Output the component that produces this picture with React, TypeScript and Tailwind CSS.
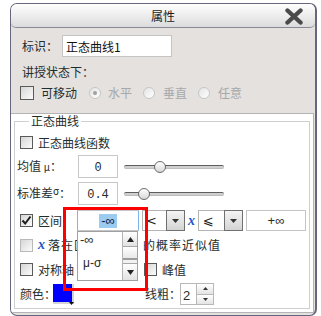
import React from "react";

function Check({ checked = false, light = false, size = 13 }: { checked?: boolean; light?: boolean; size?: number }) {
  return (
    <span
      className={`inline-flex shrink-0 items-center justify-center border ${
        light ? "border-[#b9b9b9]" : "border-[#5a5a5a]"
      } bg-gradient-to-br from-[#d6d6d6] to-[#fcfcfc] ${size === 14 ? "w-[14px] h-[14px]" : "w-[13px] h-[13px]"}`}
    >
      {checked && (
        <svg width="11" height="11" viewBox="0 0 11 11">
          <path d="M1.5 5.5 L4.2 8.5 L9.5 1.5" fill="none" stroke="#1e1e1e" strokeWidth="2" />
        </svg>
      )}
    </span>
  );
}

function Radio({ checked = false }: { checked?: boolean }) {
  return (
    <span className="inline-flex w-[12px] h-[12px] shrink-0 items-center justify-center rounded-full border border-[#c6c6c6] bg-gradient-to-br from-[#e4e4e4] to-white">
      {checked && <span className="w-[4px] h-[4px] rounded-full bg-[#a0a0a0]" />}
    </span>
  );
}

function Slider({ pos }: { pos: number }) {
  return (
    <div className="relative w-[100px] h-[12px] flex items-center">
      <div className="w-full h-[4px] rounded-full border-t border-[#5e5e5e] border-b border-b-[#bdbdbd] bg-[#cfcfcf]" />
      <div
        className="absolute top-0 w-[12px] h-[12px] rounded-full border border-[#6a6a6a] bg-gradient-to-b from-white to-[#d8d8d8]"
        style={{ left: pos }}
      />
    </div>
  );
}

function DropBtn() {
  return (
    <div className="w-[19px] h-full flex items-center justify-center border border-[#707070] bg-gradient-to-b from-[#f4f4f4] to-[#d4d4d4]">
      <svg width="7" height="4" viewBox="0 0 7 4">
        <path d="M0 0H7L3.5 4Z" fill="#333" />
      </svg>
    </div>
  );
}

export default function App() {
  return (
    <div className="relative w-[321px] h-[316px] bg-white overflow-hidden whitespace-nowrap font-['Noto_Sans_CJK_SC','Noto_Sans',sans-serif] text-[12px] text-[#1f2d2d]">
      <div className="ml-[10px] mt-[3px] w-[307px] h-[313px] flex flex-col rounded-[7px] border-l border-t border-b border-r-2 border-[#66667e] bg-[#e4e1df] overflow-hidden">
        {/* title bar */}
        <div className="h-[24px] shrink-0 grid grid-cols-[1fr_auto_1fr] items-center rounded-b-[5px] border-b border-[#8a8a96] bg-gradient-to-b from-[#fefefe] to-[#dcdcdc]">
          <div />
          <span className="leading-[14px] text-[#1a1a1a]">属性</span>
          <div className="flex justify-end pr-[11px] pt-[1px]">
            <svg width="20" height="17" viewBox="0 0 20 17">
              <path d="M3.5 2.5L16.5 14.5M16.5 2.5L3.5 14.5" stroke="#4a4a4a" strokeWidth="4.4" strokeLinecap="round" />
            </svg>
          </div>
        </div>

        {/* top section */}
        <div className="h-[85px] shrink-0 pl-[11px]">
          <div className="mt-[7px] h-[22px] flex items-center">
            <span className="w-[40px] shrink-0 leading-[14px]">标识：</span>
            <div className="w-[110px] h-[22px] border border-[#c4c4c4] bg-white pl-[3px] pt-[4px] leading-[14px] text-[#111]">
              正态曲线1
            </div>
          </div>
          <div className="mt-[7px] h-[16px] leading-[16px]">讲授状态下：</div>
          <div className="mt-[6px] h-[14px] flex items-center -ml-[2px] leading-[14px]">
            <Check size={14} />
            <span className="ml-[7px]">可移动</span>
            <span className="ml-[12px] flex">
              <Radio checked />
            </span>
            <span className="ml-[7px] text-[#a8a8a8]">水平</span>
            <span className="ml-[11px] flex">
              <Radio />
            </span>
            <span className="ml-[8px] text-[#a8a8a8]">垂直</span>
            <span className="ml-[11px] flex">
              <Radio />
            </span>
            <span className="ml-[8px] text-[#a8a8a8]">任意</span>
          </div>
        </div>

        {/* white area */}
        <div className="h-[200px] shrink-0 mr-[1px] flex flex-col border-t border-b border-r border-[#b4b4b4] bg-white pl-[3px] pr-[3px] pb-[3px]">
          <fieldset className="flex-1 min-h-0 border border-[#cdd1cd]">
            <legend className="ml-[14px] px-[2px] leading-[14px]">正态曲线</legend>

            {/* row A */}
            <div className="mt-[7px] h-[15px] flex items-center pl-[5px] leading-[14px]">
              <Check />
              <span className="ml-[5px]">正态曲线函数</span>
            </div>

            {/* row B */}
            <div className="mt-[5px] h-[23px] flex items-center pl-[2px]">
              <span className="w-[61px] shrink-0 leading-[14px]">
                均值 <span className="text-[10px]">μ</span>：
              </span>
              <div className="w-[40px] h-[23px] border border-[#c8c8c8] bg-white text-center pt-[5px] leading-[14px] font-['Liberation_Mono',monospace]">
                0
              </div>
              <div className="ml-[6px]">
                <Slider pos={30} />
              </div>
            </div>

            {/* row C */}
            <div className="mt-[4px] h-[23px] flex items-center pl-[2px]">
              <span className="w-[61px] shrink-0 leading-[14px]">
                标准差<span className="text-[10px] relative top-[-3px]">σ</span>：
              </span>
              <div className="w-[40px] h-[23px] border border-[#c8c8c8] bg-white text-center pt-[5px] leading-[14px] font-['Liberation_Mono',monospace]">
                0.4
              </div>
              <div className="ml-[6px]">
                <Slider pos={14} />
              </div>
            </div>

            {/* row D */}
            <div className="mt-[5px] h-[21px] flex items-center pl-[5px]">
              <Check checked />
              <span className="ml-[5px] w-[39px] shrink-0 leading-[14px]">区间</span>
              <div className="relative w-[62px] h-[21px] shrink-0">
                <div className="w-full h-full flex items-center justify-center border-y border-[#c6c6c6] border-x border-x-[#7db6ea] bg-white">
                  <span className="px-[2px] leading-[14px] bg-[#9ccbf0] text-[#10204a] font-['Liberation_Sans',sans-serif] text-[13px]">-∞</span>
                </div>
                {/* dropdown list */}
                <div className="absolute z-10 left-0 top-[21px] w-[61px] h-[50px] flex border border-[#a0a0a0] bg-white">
                  <div className="flex-1 flex flex-col font-['Liberation_Sans',sans-serif] text-[13px] text-[#1f2d2d]">
                    <div className="mt-[1px] pl-[2px] leading-[14px]">-∞</div>
                    <div className="mt-[9px] pl-[5px] leading-[14px] text-[12px]">μ-σ</div>
                  </div>
                  <div className="w-[15px] flex flex-col border-l border-[#b4b4b4] bg-[#f2f2f2]">
                    <div className="h-[15px] flex items-center justify-center border-b border-[#a8a8a8] bg-gradient-to-b from-white to-[#e2e2e2]">
                      <svg width="7" height="5" viewBox="0 0 7 5">
                        <path d="M0 5H7L3.5 0Z" fill="#222" />
                      </svg>
                    </div>
                    <div className="flex-1 flex flex-col">
                      <div className="h-[13px] border-b-2 border-[#9c9c9c] bg-gradient-to-b from-white to-[#e8e8e8]" />
                    </div>
                    <div className="h-[17px] flex items-center justify-center border-t border-[#a8a8a8] bg-gradient-to-b from-white to-[#e2e2e2]">
                      <svg width="7" height="5" viewBox="0 0 7 5">
                        <path d="M0 0H7L3.5 5Z" fill="#222" />
                      </svg>
                    </div>
                  </div>
                </div>
                {/* red highlight */}
                <div className="absolute z-20 pointer-events-none left-[-14px] top-[-3px] w-[85px] h-[84px] border-[3px] border-[#ff0000]" />
              </div>
              <div className="ml-[3px] h-[21px] flex">
                <div className="w-[24px] h-full flex items-center pl-[3px] border border-r-0 border-[#b4b4b4] bg-white font-['DejaVu_Sans',sans-serif] text-[13px] leading-[14px] text-[#222]">
                  &lt;
                </div>
                <DropBtn />
              </div>
              <span className="w-[13px] shrink-0 text-center italic font-bold font-['Liberation_Serif',serif] text-[14px] leading-[14px] text-[#2356c8]">
                x
              </span>
              <div className="h-[21px] flex">
                <div className="w-[26px] h-full flex items-center pl-[4px] border border-r-0 border-[#b4b4b4] bg-white font-['DejaVu_Sans',sans-serif] text-[13px] leading-[14px] text-[#222]">
                  ⩽
                </div>
                <DropBtn />
              </div>
              <div className="ml-[3px] w-[60px] h-[21px] flex items-center justify-center border border-[#c4c4c4] bg-white font-['Liberation_Sans',sans-serif] text-[13px] leading-[14px]">
                +∞
              </div>
            </div>

            {/* row E */}
            <div className="mt-[6px] h-[16px] flex items-center pl-[5px] leading-[14px]">
              <Check light />
              <span className="ml-[5px] w-[8px] shrink-0 italic font-bold font-['Liberation_Serif',serif] text-[14px] text-[#2356c8]">x</span>
              <span className="w-[97px] shrink-0 pl-[2px] tracking-[1px]">落在区间</span>
              <span className="tracking-[1px]">的概率近似值</span>
            </div>

            {/* row F */}
            <div className="mt-[9px] h-[15px] flex items-center pl-[5px] leading-[14px]">
              <Check />
              <span className="ml-[5px] w-[106px] shrink-0">对称轴</span>
              <Check />
              <span className="ml-[5px]">峰值</span>
            </div>

            {/* row G */}
            <div className="mt-[6px] h-[22px] flex items-center pl-[5px] leading-[14px]">
              <span className="w-[33px] shrink-0">颜色：</span>
              <div className="relative w-[21px] h-[20px] shrink-0 border-r-2 border-b-2 border-[#d4d4d4] bg-[#0000ff]">
                <svg className="absolute right-[-2px] bottom-[-3px]" width="5" height="3" viewBox="0 0 5 3">
                  <path d="M0 0H5L2.5 3Z" fill="#111" />
                </svg>
              </div>
              <span className="ml-[71px] w-[35px] shrink-0">线粗：</span>
              <div className="w-[34px] h-[22px] shrink-0 flex border border-[#b8b8b8] bg-white">
                <div className="flex-1 pl-[2px] pt-[5px] font-['Liberation_Sans',sans-serif] text-[13px] leading-[14px]">2</div>
                <div className="w-[17px] flex flex-col border-l border-[#b8b8b8]">
                  <div className="flex-1 flex items-center justify-center border-b border-[#b8b8b8] bg-gradient-to-b from-white to-[#e4e4e4]">
                    <svg width="5" height="3" viewBox="0 0 5 3">
                      <path d="M0 3H5L2.5 0Z" fill="#333" />
                    </svg>
                  </div>
                  <div className="flex-1 flex items-center justify-center bg-gradient-to-b from-white to-[#e4e4e4]">
                    <svg width="5" height="3" viewBox="0 0 5 3">
                      <path d="M0 0H5L2.5 3Z" fill="#333" />
                    </svg>
                  </div>
                </div>
              </div>
            </div>
          </fieldset>
        </div>
      </div>
    </div>
  );
}
